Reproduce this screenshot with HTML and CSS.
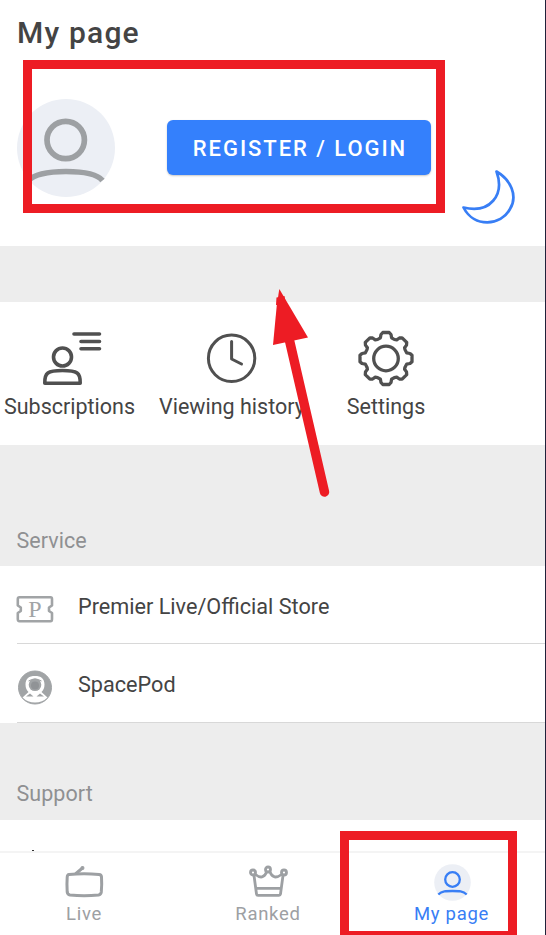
FILE: index.html
```html
<!DOCTYPE html>
<html lang="en">
<head>
<meta charset="utf-8">
<title>My page</title>
<link rel="stylesheet" href="styles.css">
</head>
<body>
<main class="screen">
  <header class="profile">
    <h1 class="title">My page</h1>
    <div class="account">
      <svg class="avatar" viewBox="0 0 98 98" width="98" height="98">
        <circle cx="49" cy="49" r="49" fill="#eceff5"/>
        <g fill="none" stroke="#9da0a3" stroke-width="5.7">
          <circle cx="48.7" cy="41" r="18.7"/>
          <path d="M11 82Q20 72.5 49 72.5T85.500 81.500"/>
        </g>
      </svg>
      <button class="login">REGISTER / LOGIN</button>
      <svg class="moon" viewBox="0 0 56 58" width="56" height="58">
        <path d="M35.500 3.500C50 12 57 28 49 41C40 58 13 60 2.500 39.500C29 46 44 27 35.500 3.500Z" fill="none" stroke="#387ef5" stroke-width="2.700" stroke-linejoin="round"/>
      </svg>
    </div>
  </header>

  <section class="shortcuts">
    <a class="shortcut">
      <svg viewBox="0 0 64 60" width="64" height="60" fill="none" stroke="#505050" stroke-width="3.600" stroke-linecap="round" stroke-linejoin="round">
        <circle cx="24.500" cy="29" r="9"/>
        <path d="M6.800 55.200C6.500 45 9.500 42.500 24.500 42.500S42.500 45 42.200 55.200ZM36 6H61.500M43 13.500H61.500M43 20.800H61.500"/>
      </svg>
      <span>Subscriptions</span>
    </a>
    <a class="shortcut">
      <svg viewBox="0 0 60 60" width="60" height="60" fill="none" stroke="#505050" stroke-width="3" stroke-linecap="round" stroke-linejoin="round">
        <circle cx="29.600" cy="30.300" r="23.200"/>
        <path d="M29.600 13.500V31L39.500 36"/>
      </svg>
      <span>Viewing history</span>
    </a>
    <a class="shortcut">
      <svg viewBox="-30 -30.500 60 60" width="60" height="60" fill="none" stroke="#505050" stroke-width="3.300" stroke-linejoin="round">
        <circle r="12.300"/>
        <path d="M-3.200 -26H3.200L5 -24L5.600 -20.700Q9 -18.500 10.700 -18.600L13.400 -20.500L16.100 -20.700L20.700 -16.100L20.500 -13.400L18.600 -10.700Q18.500 -9 20.700 -5.600L24 -5L26 -3.200V3.200L24 5L20.700 5.600Q18.500 9 18.600 10.700L20.500 13.400L20.700 16.100L16.100 20.700L13.400 20.500L10.700 18.600Q9 18.500 5.600 20.700L5 24L3.200 26H-3.200L-5 24L-5.600 20.700Q-9 18.500 -10.700 18.600L-13.400 20.500L-16.100 20.700L-20.700 16.100L-20.500 13.400L-18.600 10.700Q-18.500 9 -20.700 5.600L-24 5L-26 3.200V-3.200L-24 -5L-20.700 -5.600Q-18.500 -9 -18.600 -10.700L-20.500 -13.400L-20.700 -16.100L-16.100 -20.700L-13.400 -20.500L-10.700 -18.600Q-9 -18.500 -5.600 -20.700L-5 -24Z"/>
      </svg>
      <span>Settings</span>
    </a>
  </section>

  <h2 class="section-title service">Service</h2>
  <ul class="list">
    <li class="row">
      <svg viewBox="0 0 38 38" width="38" height="38">
        <path d="M3.500 7.200H34.500Q36 7.200 36 9V15.500L33 17.500V21L36 23V29Q36 31.200 34.500 31.200H3.500Q1.800 31.200 1.800 29V23L4.800 21V17.500L1.800 15.500V9Q1.800 7.200 3.500 7.200Z" fill="none" stroke="#a1a4a6" stroke-width="2.600" stroke-linejoin="round"/>
        <text class="ticket-letter" x="19" y="27" text-anchor="middle">P</text>
      </svg>
      <span>Premier Live/Official Store</span>
    </li>
    <li class="row">
      <svg viewBox="0 0 38 38" width="38" height="38">
        <circle cx="19" cy="19.500" r="16.500" fill="#a1a4a6" stroke="#a1a4a6"/>
        <path d="M6.500 29.500L12.500 24Q9.500 21 9.500 16.500C9.500 10.500 13 8 19 8S28.500 10.500 28.500 16.500Q28.500 21 25.500 24L31.500 29.500Q26.500 34.500 19 34.500T6.500 29.500Z" fill="#fff"/>
        <circle cx="19" cy="16.800" r="6.300" fill="#a1a4a6"/>
        <circle cx="19" cy="17.500" r="4" fill="#909396"/>
        <path d="M12.500 13Q19 9 25.500 13" fill="none" stroke="#a1a4a6"/>
        <path d="M10 28.500L14 25.500L17.500 28.500ZM28 28.500L24 25.500L20.500 28.500Z" fill="#a1a4a6"/>
      </svg>
      <span>SpacePod</span>
    </li>
  </ul>

  <h2 class="section-title support">Support</h2>
  <div class="next-row"><i class="peek"></i></div>

  <nav class="tabs">
    <a class="tab">
      <svg viewBox="0 0 40 38" width="40" height="38" fill="none" stroke="#9da0a3" stroke-width="3" stroke-linecap="round" stroke-linejoin="round">
        <path d="M5 10.500Q20 9 35 10.500Q37.300 10.700 37.500 13Q38 20.500 37.300 28Q37 30.500 34.500 31Q20 32.500 6 31Q3.500 30.500 3.200 28Q2.700 20 3.200 13Q3.400 10.700 5 10.500Z"/>
        <path d="M12 9.500L18.500 4"/><circle cx="18.500" cy="4" r=".5"/>
      </svg>
      <span>Live</span>
    </a>
    <a class="tab">
      <svg viewBox="0 0 40 38" width="40" height="38" fill="none" stroke="#9da0a3" stroke-width="2.800" stroke-linejoin="round">
        <circle cx="5" cy="8.500" r="2.500"/><circle cx="20" cy="5.500" r="2.500"/><circle cx="36" cy="8.500" r="2.500"/>
        <path d="M6 11.500L8.500 30Q8.700 31.300 10 31.300H31Q32.300 31.300 32.500 30L35 11.500M7.500 10.500Q15 16.500 18.600 8M22 8Q25.500 16.500 33.500 10.500M8.200 24.300H32.800"/>
      </svg>
      <span>Ranked</span>
    </a>
    <a class="tab active">
      <svg viewBox="0 0 40 38" width="40" height="38">
        <circle cx="20.500" cy="18.500" r="18.300" fill="#eceff5"/>
        <g fill="none" stroke="#387ef5" stroke-width="2.300"><circle cx="20.500" cy="15.500" r="7.300"/><path d="M6.300 30.500C10 27 14 27 20.500 27S31 27 34.700 30.500"/></g>
      </svg>
      <span>My page</span>
    </a>
  </nav>

  <div class="highlight highlight-login"></div>
  <div class="highlight highlight-tab"></div>
  <svg class="arrow" viewBox="0 0 70 212" width="70" height="212">
    <path d="M18 45L54.500 203" stroke="#ed1c24" stroke-width="9.500" stroke-linecap="round"/>
    <path d="M9.300 0L38 48.500L3 56L6.700 17Z" fill="#ed1c24"/><path d="M6.500 8.500L14.500 7L16 16H6Z" fill="#ed1c24"/>
  </svg>
</main>
</body>
</html>
```
FILE: styles.css
```css
* { box-sizing: border-box; }
body { margin: 0; font-family: Roboto, "Liberation Sans", sans-serif; color: #444; }
.screen {
  position: relative;
  display: flex;
  flex-direction: column;
  width: 546px;
  height: 935px;
  overflow: hidden;
  background: #ededed;
  border-right: 1px solid #20213a;
}
.profile { height: 246px; padding: 15px 17px 0; background: #fff; }
.title { margin: 0; font-size: 30px; line-height: 36px; font-weight: 500; letter-spacing: 1.200px; }
.account { display: flex; align-items: flex-start; padding-top: 48px; }
.avatar { flex: none; }
.login {
  width: 264px;
  height: 55px;
  margin: 21px 0 0 52px;
  padding: 3px 0 0 2px;
  border: 0;
  border-radius: 6px;
  background: #3480fc;
  box-shadow: 0 1px 2px rgba(0, 0, 0, .22);
  color: #fff;
  font: 500 22px/26px Roboto, sans-serif;
  letter-spacing: 1.950px;
  white-space: nowrap;
}
.moon { margin: 69px 0 0 30px; flex: none; }
.shortcuts {
  display: grid;
  grid-template-columns: 139px 186px 122px;
  height: 143px;
  margin-top: 56px;
  padding-top: 26px;
  background: #fff;
}
.shortcut { display: flex; flex-direction: column; align-items: center; gap: 6px; font-size: 21.500px; line-height: 26px; white-space: nowrap; }
.section-title { margin: 0; padding-left: 16.500px; color: #8f9092; font-size: 21.500px; line-height: 26px; font-weight: 400; letter-spacing: .05px; }
.service { height: 121px; padding-top: 83px; }
.support { height: 97px; padding-top: 58px; }
.list { margin: 0; padding: 0 0 0 17px; list-style: none; background: #fff; }
.row { display: flex; align-items: center; gap: 24px; height: 78.500px; padding-top: 8px; border-bottom: 1.500px solid #d8d8d8; font-size: 21.650px; }
.row:first-child { height: 78px; }
.row svg { margin-left: -1px; flex: none; }
.row span { margin-top: -4px; }
.ticket-letter { font: 24px "Liberation Serif", serif; fill: #a1a4a6; }
.next-row { display: flex; align-items: flex-end; height: 31.500px; padding-left: 32px; background: #fff; }
.peek { width: 2px; height: 1px; background: #333; }
.tabs { display: grid; grid-template-columns: 168px 200px 167px; height: 84px; padding-top: 11px; border-top: 2px solid #f4f4f4; background: #fff; }
.tab { display: flex; flex-direction: column; align-items: center; color: #9da0a3; font-size: 18.500px; line-height: 24px; letter-spacing: .7px; }
.active { color: #387ef5; }
.highlight { position: absolute; border: 9px solid #ed1c24; }
.highlight-login { left: 23px; top: 60px; width: 422px; height: 153px; }
.highlight-tab { left: 340px; top: 831px; width: 177px; height: 109px; }
.arrow { position: absolute; left: 270px; top: 289px; }
```
